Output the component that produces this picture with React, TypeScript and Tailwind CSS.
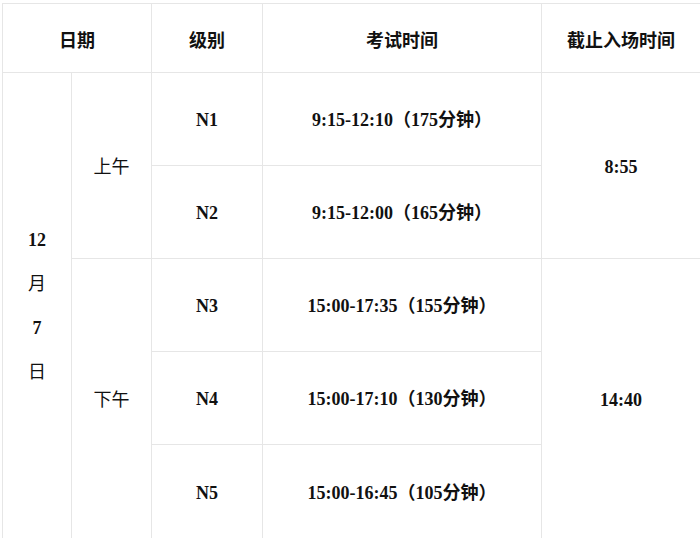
import React from "react";

// 考试时间安排
interface ExamRow {
  level: string;
  time: string;
}

const morning: ExamRow[] = [
  { level: "N1", time: "9:15-12:10（175分钟）" },
  { level: "N2", time: "9:15-12:00（165分钟）" },
];

const afternoon: ExamRow[] = [
  { level: "N3", time: "15:00-17:35（155分钟）" },
  { level: "N4", time: "15:00-17:10（130分钟）" },
  { level: "N5", time: "15:00-16:45（105分钟）" },
];

const serif = "font-['Liberation_Serif','Noto_Sans_CJK_SC',serif]";
const cell = "border border-[#e6e6e6] text-center align-middle p-0";
const body = "border border-[#e6e6e6] text-center align-middle px-0 pt-[3px] pb-0";

export default function App() {
  return (
    <div className="w-[700px] h-[538px] overflow-hidden bg-white pt-[3px] pl-[2px]">
      <table className="table-fixed border-collapse w-[698px] text-[#111]">
        <colgroup>
          <col className="w-[69px]" />
          <col className="w-[80px]" />
          <col className="w-[111px]" />
          <col className="w-[279px]" />
          <col className="w-[159px]" />
        </colgroup>
        <thead>
          <tr className="h-[69px] font-['Noto_Sans_CJK_SC',sans-serif] text-[18px] font-bold">
            <th colSpan={2} className={`${cell} pt-[2px]`}>日期</th>
            <th className={`${cell} pt-[2px]`}>级别</th>
            <th className={`${cell} pt-[2px]`}>考试时间</th>
            <th className={`${cell} pt-[2px]`}>截止入场时间</th>
          </tr>
        </thead>
        <tbody className={`${serif} text-[18px]`}>
          {morning.map((row, i) => (
            <tr key={row.level} className="h-[93px]">
              {i === 0 && (
                <td rowSpan={5} className={`${body} font-bold leading-[44px] align-top pt-[145px]`}>
                  <div>12</div>
                  <div className="font-normal">月</div>
                  <div>7</div>
                  <div className="font-normal">日</div>
                </td>
              )}
              {i === 0 && (
                <td rowSpan={2} className={body}>上午</td>
              )}
              <td className={`${body} font-bold`}>{row.level}</td>
              <td className={`${body} font-bold`}>{row.time}</td>
              {i === 0 && (
                <td rowSpan={2} className={`${body} font-bold`}>8:55</td>
              )}
            </tr>
          ))}
          {afternoon.map((row, i) => (
            <tr key={row.level} className={i === 2 ? "h-[100px]" : "h-[93px]"}>
              {i === 0 && (
                <td rowSpan={3} className={`${body} align-top pt-[128px]`}>下午</td>
              )}
              <td className={`${body} font-bold ${i === 2 ? "align-top pt-[35px]" : ""}`}>{row.level}</td>
              <td className={`${body} font-bold ${i === 2 ? "align-top pt-[35px]" : ""}`}>{row.time}</td>
              {i === 0 && (
                <td rowSpan={3} className={`${body} font-bold align-top pt-[128px]`}>14:40</td>
              )}
            </tr>
          ))}
        </tbody>
      </table>
    </div>
  );
}
